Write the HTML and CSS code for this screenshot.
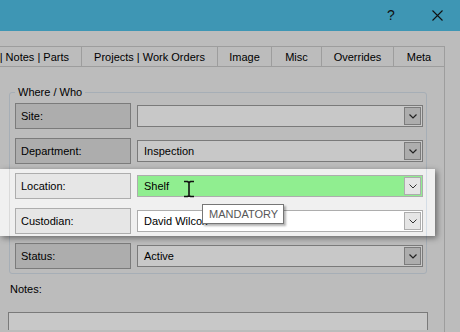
FILE: index.html
```html
<!DOCTYPE html>
<html lang="en">
<head>
  <meta charset="UTF-8" />
  <meta name="viewport" content="width=device-width, initial-scale=1.0"/>
  <title>Asset Details - Where / Who</title>
  <link rel="stylesheet" href="styles.css">
</head>
<body>
  <div class="titlebar">
    <span class="caption-btn">?</span>
    <span class="caption-btn">
      <svg width="11" height="11" viewBox="0 0 11 11"><path d="M0.5 0.5L10.5 10.5M10.5 0.5L0.5 10.5" stroke="#111" stroke-width="1.1" fill="none"/></svg>
    </span>
  </div>

  <div class="tabs">
    <div class="tab tab-first">| Notes | Parts</div>
    <div class="tab tab-projects">Projects | Work Orders</div>
    <div class="tab tab-image">Image</div>
    <div class="tab tab-misc">Misc</div>
    <div class="tab tab-overrides">Overrides</div>
    <div class="tab tab-meta">Meta</div>
  </div>

  <div class="page">
    <div class="group">
      <span class="group-title">Where / Who</span>

      <div class="row">
        <div class="field-label">Site:</div>
        <div class="combo">
          <span class="combo-text"></span>
          <span class="drop"><svg width="8" height="5" viewBox="0 0 8 5"><path d="M0.5 0.5L4 4L7.5 0.5" stroke="#222" stroke-width="1.2" fill="none"/></svg></span>
        </div>
      </div>

      <div class="row">
        <div class="field-label">Department:</div>
        <div class="combo">
          <span class="combo-text">Inspection</span>
          <span class="drop"><svg width="8" height="5" viewBox="0 0 8 5"><path d="M0.5 0.5L4 4L7.5 0.5" stroke="#222" stroke-width="1.2" fill="none"/></svg></span>
        </div>
      </div>

      <!-- highlighted rows -->
      <div class="spot">
        <div class="row">
          <div class="field-label">Location:</div>
          <div class="combo combo-required">
            <span class="combo-text">Shelf</span>
            <span class="drop"><svg width="8" height="5" viewBox="0 0 8 5"><path d="M0.5 0.5L4 4L7.5 0.5" stroke="#333" stroke-width="1" fill="none"/></svg></span>
          </div>
        </div>

        <div class="row">
          <div class="field-label">Custodian:</div>
          <div class="combo combo-white">
            <span class="combo-text">David Wilcox</span>
            <span class="drop"><svg width="8" height="5" viewBox="0 0 8 5"><path d="M0.5 0.5L4 4L7.5 0.5" stroke="#333" stroke-width="1" fill="none"/></svg></span>
          </div>
        </div>

        <svg class="ibeam" width="12" height="18" viewBox="0 0 12 18">
          <path d="M1 1.5h3.5l1.5 1 1.5-1H11M6 2.5v13M1 16.5h3.5l1.5-1 1.5 1H11" stroke="#111" stroke-width="1.6" fill="none"/>
        </svg>
        <div class="tooltip">MANDATORY</div>
      </div>

      <div class="row">
        <div class="field-label">Status:</div>
        <div class="combo">
          <span class="combo-text">Active</span>
          <span class="drop"><svg width="8" height="5" viewBox="0 0 8 5"><path d="M0.5 0.5L4 4L7.5 0.5" stroke="#222" stroke-width="1.2" fill="none"/></svg></span>
        </div>
      </div>
    </div>

    <div class="notes-label">Notes:</div>
    <div class="notes"></div>
  </div>
</body>
</html>
```

FILE: styles.css
```css
body {
  margin: 0;
  height: 332px;
  background: #bcbcbc;
  font-family: "Liberation Sans", Arial, sans-serif;
  font-size: 11px;
  line-height: 13px;
  color: #000;
  overflow: hidden;
}

.titlebar {
  height: 31px;
  background-color: #3e96b4;
  display: flex;
  justify-content: flex-end;
  align-items: center;
}

.caption-btn {
  width: 46px;
  display: flex;
  justify-content: center;
  align-items: center;
  font-size: 14px;
  color: #111;
}

.tabs {
  margin-top: 15px;
  width: 445px;
  height: 20px;
  box-sizing: border-box;
  display: flex;
  border-top: 1px solid #9d9d9d;
}

.tab {
  box-sizing: border-box;
  padding-top: 1px;
  border-right: 1px solid #9d9d9d;
  display: flex;
  align-items: center;
  justify-content: center;
  white-space: nowrap;
}

.tab-first {
  width: 82px;
  justify-content: flex-end;
  padding-right: 12px;
  overflow: hidden;
}
.tab-projects { width: 136px; }
.tab-image { width: 54px; }
.tab-misc { width: 50px; }
.tab-overrides { width: 72px; }
.tab-meta { width: 51px; }

.page {
  width: 445px;
  height: 266px;
  box-sizing: border-box;
  border-top: 1px solid #9d9d9d;
  border-right: 1px solid #9d9d9d;
}

.group {
  position: relative;
  margin: 25px 17px 0 9px;
  padding: 10px 3px 4px 5px;
  border: 1px solid #a6aeb6;
  border-radius: 3px;
  display: flex;
  flex-direction: column;
  gap: 9px;
}

.group-title {
  position: absolute;
  top: -7px;
  left: 5px;
  padding: 0 3px;
  background: #bcbcbc;
}

.row {
  display: flex;
  align-items: center;
  gap: 6px;
}

.field-label {
  width: 116px;
  height: 26px;
  box-sizing: border-box;
  padding-left: 5px;
  display: flex;
  align-items: center;
  background: #adadad;
  border: 1px solid #7b7b7b;
}

.combo {
  flex: 1;
  height: 22px;
  box-sizing: border-box;
  padding-left: 6px;
  display: flex;
  align-items: center;
  background: #c8c8c8;
  border: 1px solid #7a7a7a;
}

.combo-text {
  flex: 1;
  white-space: nowrap;
}

.drop {
  width: 17px;
  height: 18px;
  margin-right: 1px;
  box-sizing: border-box;
  display: flex;
  align-items: center;
  justify-content: center;
  background: #adadad;
  border: 1px solid #7b7b7b;
}

/* undimmed strip with Location / Custodian */
.spot {
  position: relative;
  margin: -4px -12px -2px -15px;
  padding: 4px 12px 2px 15px;
  display: flex;
  flex-direction: column;
  gap: 9px;
  background:
    linear-gradient(#dadada, #dadada) 9px 0 / 1px 100% no-repeat,
    linear-gradient(#d4dde6, #d4dde6) 426px 0 / 1px 100% no-repeat,
    #f0f0f0;
  box-shadow: 2px 2px 6px rgba(0, 0, 0, 0.45);
}

.spot .field-label {
  background: #e6e6e6;
  border-color: #adadad;
}

.spot .combo {
  border-color: #adadad;
}

.spot .drop {
  background: #e5e5e5;
  border-color: #adadad;
}

.combo-required {
  background: #90ee90;
}

.combo-white {
  background: #fff;
}

.ibeam {
  position: absolute;
  left: 183px;
  top: 11px;
}

.tooltip {
  position: absolute;
  left: 202px;
  top: 35px;
  width: 82px;
  height: 20px;
  box-sizing: border-box;
  padding-left: 6px;
  display: flex;
  align-items: center;
  background: #fff;
  border: 1px solid #767676;
  color: #575757;
  box-shadow: 2px 2px 2px rgba(0, 0, 0, 0.3);
}

.notes-label {
  margin: 9px 0 0 10px;
}

/* box continues below the visible area */
.notes {
  margin: 16px 0 0 8px;
  width: 420px;
  height: 18px;
  box-sizing: border-box;
  background: #c8c8c8;
  border: 1px solid #7a7a7a;
  border-bottom: 0;
}
```
